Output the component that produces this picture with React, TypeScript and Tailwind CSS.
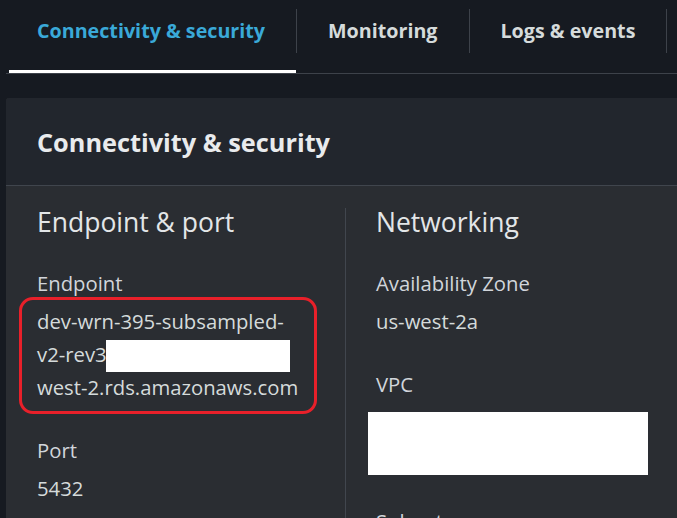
import React from "react";

const tabs = [
  { label: "Connectivity & security", active: true },
  { label: "Monitoring", active: false },
  { label: "Logs & events", active: false },
];

const Field = ({ label, children }: { label: string; children: React.ReactNode }) => (
  <div>
    <div className="text-[20.3px] leading-[33px] text-[#d1d5db]">{label}</div>
    <div className="mt-[5px] text-[20.3px] leading-[33px] text-[#d5dbdb]">{children}</div>
  </div>
);

const App = () => {
  return (
    <div
      className="h-[518px] w-[677px] overflow-hidden bg-[#161a21] pl-[6px]"
      style={{ fontFamily: '"Open Sans", "Noto Sans", sans-serif' }}
    >
      {/* tab strip */}
      <div className="flex h-[74px] border-b border-[#3d424a]">
        {tabs.map((tab) => (
          <div key={tab.label} className="relative flex h-full">
            <div
              className={`mt-[9px] flex h-[44px] items-center px-[31px] text-[19.7px] font-bold leading-[24px] whitespace-nowrap ${
                tab.active ? "text-[#3aa9d8]" : "text-[#d5dbdb]"
              }`}
            >
              {tab.label}
            </div>
            <div className="mt-[9px] h-[44px] w-px bg-[#3d424a]" />
            {tab.active && (
              <div className="absolute bottom-0 left-[3px] right-[1px] h-[3px] bg-white" />
            )}
          </div>
        ))}
      </div>

      {/* container */}
      <div className="mt-[24px] rounded-tl-[3px] bg-[#2a2d32]">
        <div className="flex h-[88px] items-center rounded-tl-[3px] border-b border-[#40454d] bg-[#22262d] px-[31px]">
          <h2 className="text-[25.3px] font-bold leading-[32px] text-[#e9ebed]">
            Connectivity &amp; security
          </h2>
        </div>

        <div className="flex pt-[22px]">
          <div className="w-[339px] shrink-0 pl-[31px] pr-[20px]">
            <h3 className="text-[26.5px] leading-[28px] text-[#e3e6e8]">Endpoint &amp; port</h3>
            <div className="mt-[31px] flex flex-col gap-[30px]">
              <Field label="Endpoint">
                <div className="relative whitespace-nowrap">
                  <div>dev-wrn-395-subsampled-</div>
                  <div>v2-rev3</div>
                  <div>west-2.rds.amazonaws.com</div>
                  <span className="absolute left-[69px] top-[35px] h-[32px] w-[184px] bg-white" />
                  <div className="pointer-events-none absolute -top-[8px] -left-[18px] h-[117px] w-[298px] rounded-[14px] border-[3px] border-[#e8202a]" />
                </div>
              </Field>
              <Field label="Port">5432</Field>
            </div>
          </div>

          <div className="flex-1 border-l border-[#41464e] pl-[30px]">
            <h3 className="text-[26.5px] leading-[28px] text-[#e3e6e8]">Networking</h3>
            <div className="mt-[31px] flex flex-col gap-[30px]">
              <Field label="Availability Zone">us-west-2a</Field>
              <Field label="VPC">
                <div className="-ml-[8px] mt-[11px] h-[63px] w-[280px] bg-white" />
              </Field>
              <Field label="Subnets">subnet</Field>
            </div>
          </div>
        </div>
      </div>
    </div>
  );
};

export default App;
